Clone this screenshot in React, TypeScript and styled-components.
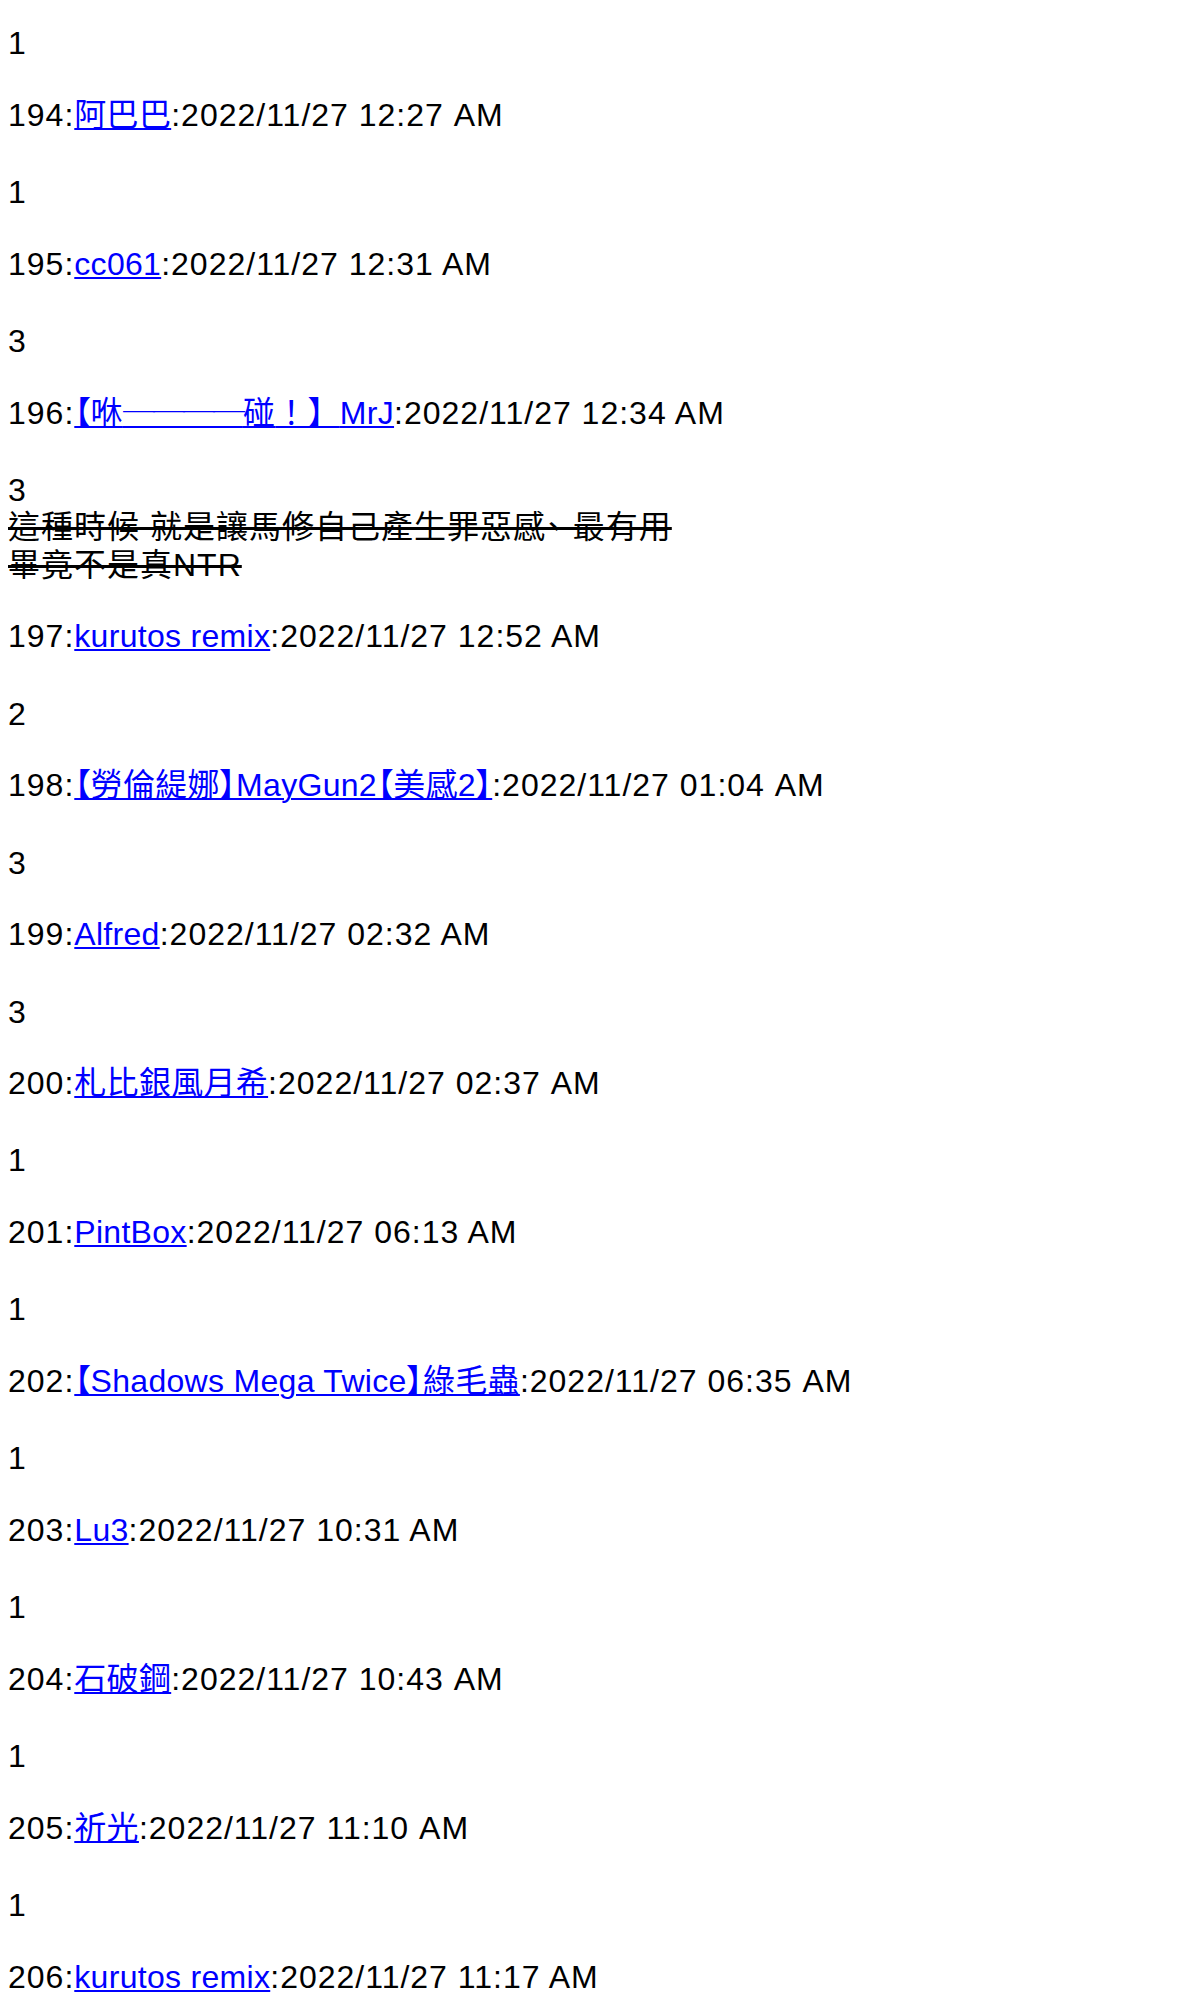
import React from 'react';
import styled, { createGlobalStyle } from 'styled-components';

const GlobalStyle = createGlobalStyle`
  html, body {
    margin: 0;
    background: #ffffff;
  }
  body {
    padding: 0 8px;
    color: #000000;
    font-family: 'Liberation Sans', 'Noto Sans CJK TC', sans-serif;
    font-size: 32px;
    line-height: 37.3px;
    letter-spacing: 1px;
    font-feature-settings: 'palt';
  }
`;

const Thread = styled.div`
  padding-top: 25px;
`;

const Post = styled.div``;

const Header = styled.div`
  white-space: nowrap;
`;

const Name = styled.a`
  color: #0000ff;
  letter-spacing: 0.3px;
  text-decoration: underline;
  text-decoration-thickness: 2px;
  text-underline-offset: 2px;
`;

// full-width punctuation kept at its full em box
const Wide = styled.span`
  font-feature-settings: normal;
`;

const Dash = styled.span`
  font-family: 'Noto Sans CJK TC', sans-serif;
  letter-spacing: -2px;
  line-height: 0;
`;

const Body = styled.div<{ $lead?: boolean }>`
  margin: ${p => (p.$lead ? '0 0 34.4px' : '40px 0 34.4px')};
`;

const Struck = styled.span`
  text-decoration: line-through;
  text-decoration-thickness: 3px;
`;

interface Entry {
  no: number;
  name: React.ReactNode;
  time: string;
  body: React.ReactNode;
}

const entries: Entry[] = [
  { no: 194, name: '阿巴巴', time: '12:27 AM', body: '1' },
  { no: 195, name: 'cc061', time: '12:31 AM', body: '3' },
  {
    no: 196,
    name: (
      <>
        【咻<Dash>────</Dash>碰<Wide>！】</Wide>MrJ
      </>
    ),
    time: '12:34 AM',
    body: (
      <>
        3
        <br />
        <Struck>
          這種時候 就是讓馬修自己產生罪惡感、 最有用
          <br />
          畢竟不是真NTR
        </Struck>
      </>
    )
  },
  { no: 197, name: 'kurutos remix', time: '12:52 AM', body: '2' },
  { no: 198, name: '【勞倫緹娜】MayGun2【美感2】', time: '01:04 AM', body: '3' },
  { no: 199, name: 'Alfred', time: '02:32 AM', body: '3' },
  { no: 200, name: '札比銀風月希', time: '02:37 AM', body: '1' },
  { no: 201, name: 'PintBox', time: '06:13 AM', body: '1' },
  { no: 202, name: '【Shadows Mega Twice】綠毛蟲', time: '06:35 AM', body: '1' },
  { no: 203, name: 'Lu3', time: '10:31 AM', body: '1' },
  { no: 204, name: '石破鋼', time: '10:43 AM', body: '1' },
  { no: 205, name: '祈光', time: '11:10 AM', body: '1' },
  { no: 206, name: 'kurutos remix', time: '11:17 AM', body: '1' }
];

export default function App() {
  return (
    <>
      <GlobalStyle />
      <Thread>
        <Body $lead>1</Body>
        {entries.map(e => (
          <Post key={e.no}>
            <Header>
              {e.no}:<Name href="#">{e.name}</Name>:2022/11/27 {e.time}
            </Header>
            <Body>{e.body}</Body>
          </Post>
        ))}
      </Thread>
    </>
  );
}
